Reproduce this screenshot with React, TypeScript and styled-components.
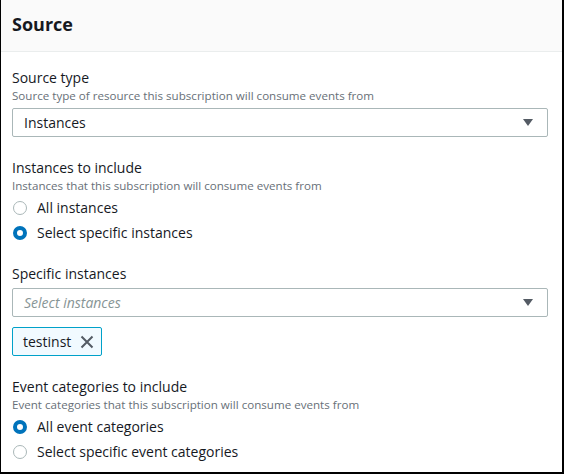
import React from 'react';
import styled, { createGlobalStyle } from 'styled-components';

const GlobalStyle = createGlobalStyle`
  html, body {
    margin: 0;
    padding: 0;
    background: #ffffff;
  }
  body {
    font-family: "Open Sans", "Noto Sans", Arial, sans-serif;
    color: #16191f;
  }
`;

const Frame = styled.div`
  width: 564px;
  height: 474px;
  box-sizing: border-box;
  border-left: 1px solid #000;
  border-right: 2px solid #000;
  border-bottom: 2px solid #000;
  overflow: hidden;
  background: #fff;
`;

const Header = styled.div`
  height: 52px;
  box-sizing: border-box;
  background: #fafafa;
  border-bottom: 1px solid #eaeded;
  display: flex;
  align-items: center;
  padding: 0 11px 4px;
`;

const Title = styled.h2`
  margin: 0;
  font-size: 18px;
  font-weight: 700;
  color: #16191f;
`;

const Body = styled.div`
  padding: 16px 14px 0 11px;
  display: flex;
  flex-direction: column;
`;

const Field = styled.div<{ $gap?: number }>`
  display: flex;
  flex-direction: column;
  margin-bottom: ${p => p.$gap ?? 0}px;
`;

const Label = styled.div`
  font-size: 14px;
  line-height: 20px;
  color: #16191f;
`;

const Description = styled.div`
  font-size: 11.6px;
  line-height: 16px;
  color: #687078;
  margin-bottom: 4px;
`;

const SelectBox = styled.div<{ $top?: number }>`
  height: 29px;
  box-sizing: border-box;
  border: 1px solid #aab7b8;
  border-radius: 2px;
  display: flex;
  align-items: center;
  justify-content: space-between;
  padding: 0 14px 0 11px;
  margin-top: ${p => p.$top ?? 0}px;
`;

const SelectValue = styled.span<{ $placeholder?: boolean }>`
  font-size: 14px;
  color: ${p => (p.$placeholder ? '#879596' : '#16191f')};
  font-style: ${p => (p.$placeholder ? 'italic' : 'normal')};
`;

const Caret = () => (
  <svg width="10" height="7" viewBox="0 0 10 7">
    <path d="M0 0 H10 L5 7 Z" fill="#545b64" />
  </svg>
);

const RadioList = styled.div`
  display: flex;
  flex-direction: column;
  gap: 5px;
`;

const RadioRow = styled.label`
  display: flex;
  align-items: center;
  gap: 10px;
  font-size: 14px;
  line-height: 20px;
  color: #16191f;
`;

const RadioDot = styled.span<{ $checked?: boolean }>`
  width: 14px;
  height: 14px;
  margin-left: 1px;
  box-sizing: border-box;
  border-radius: 50%;
  border: ${p => (p.$checked ? '4px solid #0073bb' : '1px solid #aab7b8')};
  background: #fff;
`;

const Token = styled.div`
  align-self: flex-start;
  margin-top: 10px;
  height: 29px;
  box-sizing: border-box;
  display: flex;
  align-items: center;
  gap: 9px;
  padding: 0 7px 0 10px;
  background: #f1faff;
  border: 1px solid #00a1c9;
  border-radius: 2px;
  font-size: 14px;
  color: #16191f;
`;

const Close = () => (
  <svg width="14" height="14" viewBox="0 0 14 14">
    <path d="M1.5 1.5 L12.5 12.5 M12.5 1.5 L1.5 12.5" stroke="#545b64" strokeWidth="2" fill="none" />
  </svg>
);

interface Option {
  label: string;
  checked?: boolean;
}

const Radios: React.FC<{ options: Option[] }> = ({ options }) => (
  <RadioList>
    {options.map(o => (
      <RadioRow key={o.label}>
        <RadioDot $checked={o.checked} />
        {o.label}
      </RadioRow>
    ))}
  </RadioList>
);

export default function App() {
  return (
    <>
      <GlobalStyle />
      <Frame>
        <Header>
          <Title>Source</Title>
        </Header>
        <Body>
          <Field $gap={21}>
            <Label>Source type</Label>
            <Description>Source type of resource this subscription will consume events from</Description>
            <SelectBox>
              <SelectValue>Instances</SelectValue>
              <Caret />
            </SelectBox>
          </Field>
          <Field $gap={21}>
            <Label>Instances to include</Label>
            <Description>Instances that this subscription will consume events from</Description>
            <Radios options={[{ label: 'All instances' }, { label: 'Select specific instances', checked: true }]} />
          </Field>
          <Field $gap={21}>
            <Label>Specific instances</Label>
            <SelectBox $top={4}>
              <SelectValue $placeholder>Select instances</SelectValue>
              <Caret />
            </SelectBox>
            <Token>
              testinst
              <Close />
            </Token>
          </Field>
          <Field>
            <Label>Event categories to include</Label>
            <Description>Event categories that this subscription will consume events from</Description>
            <Radios options={[{ label: 'All event categories', checked: true }, { label: 'Select specific event categories' }]} />
          </Field>
        </Body>
      </Frame>
    </>
  );
}
